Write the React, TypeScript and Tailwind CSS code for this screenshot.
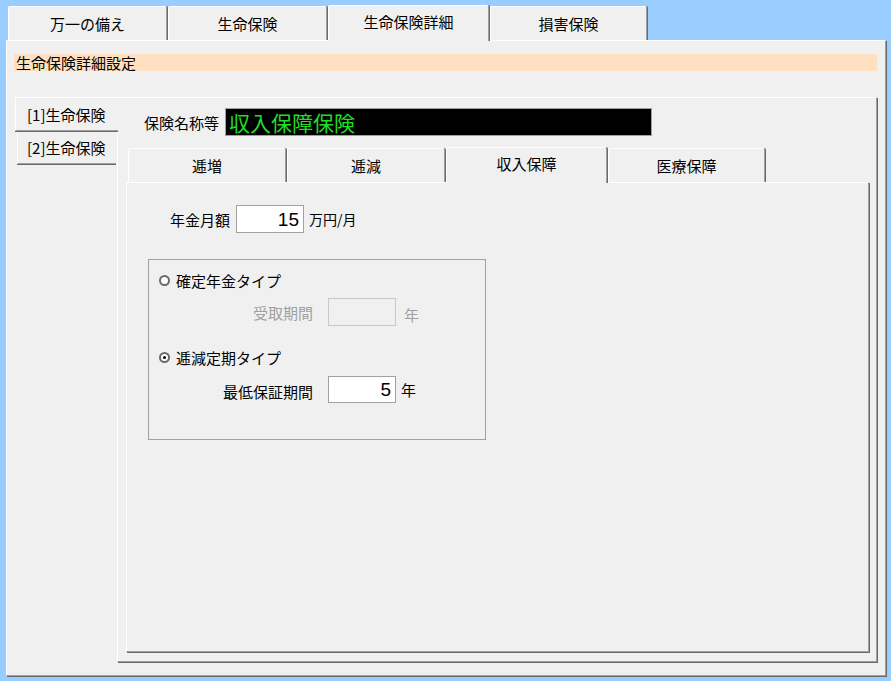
import React from "react";

const F = "font-['Noto_Sans_CJK_JP','Noto_Sans',sans-serif]";

function TopTab({ label, w, sel }: { label: string; w: string; sel?: boolean }) {
  return (
    <div
      className={`${w} ${
        sel ? "h-[36px] -mb-px relative z-10 pb-[4px]" : "h-[34px]"
      } flex items-center justify-center bg-[#f0f0f0] border-t border-l border-r border-white border-r-[#a0a0a0] shadow-[1px_0_0_#696969] rounded-tl-[2px] rounded-tr-[2px] text-[15px] leading-none text-black`}
    >
      {label}
    </div>
  );
}

function Radio({ checked }: { checked?: boolean }) {
  return (
    <span className="w-[11px] h-[11px] rounded-full border-2 border-[#6a6a6a] bg-white flex items-center justify-center shrink-0">
      {checked && <span className="w-[3px] h-[3px] rounded-full bg-black" />}
    </span>
  );
}

export default function App() {
  return (
    <div className={`w-[891px] h-[681px] bg-[#99ccff] flex flex-col pl-[6px] pr-[5px] pb-[5px] pt-[5px] ${F} text-black`}>
      {/* top tabs */}
      <div className="h-[35px] flex items-end gap-[1px] ml-[2px]">
        <TopTab label="万一の備え" w="w-[159px]" />
        <TopTab label="生命保険" w="w-[159px]" />
        <TopTab label="生命保険詳細" w="w-[161px]" sel />
        <TopTab label="損害保険" w="w-[157px]" />
      </div>

      {/* main panel */}
      <div className="flex-1 bg-[#f0f0f0] border-t border-l border-r border-b border-white border-r-[#a0a0a0] border-b-[#a0a0a0] shadow-[1px_1px_0_#696969] flex flex-col pt-[13px] pl-[7px] pr-[8px]">
        <div className="h-[17px] bg-[#ffe0c0] pl-[2px] text-[15px] leading-[17px]">生命保険詳細設定</div>

        <div className="mt-[26px] h-[565px] flex">
          {/* left vertical tabs */}
          <div className="w-[103px] flex flex-col">
            <div className="h-[34px] -mr-px ml-[1px] relative z-10 bg-[#f0f0f0] border-t border-l border-white border-b border-b-[#a0a0a0] shadow-[0_1px_0_#696969] flex items-center pl-[11px] text-[15px] leading-none">
              [1]生命保険
            </div>
            <div className="h-[32px] mt-[1px] ml-[3px] mr-[1px] bg-[#f0f0f0] border-l border-white border-b border-b-[#a0a0a0] shadow-[0_1px_0_#696969] flex items-center pl-[9px] text-[15px] leading-none">
              [2]生命保険
            </div>
          </div>

          {/* body */}
          <div className="flex-1 border-t border-l border-r border-b border-white border-r-[#a0a0a0] border-b-[#a0a0a0] shadow-[1px_1px_0_#696969] flex flex-col pt-[10px]">
            <div className="flex items-center ml-[26px]">
              <div className="w-[81px] text-[15px] leading-none">保険名称等</div>
              <div className="w-[427px] h-[28px] bg-black border border-[#a0a0a0] flex items-center pl-[3px] text-[21px] leading-none text-[#22dd22]">
                収入保障保険
              </div>
            </div>

            {/* sub tabs */}
            <div className="mt-[12px] h-[34px] flex items-end gap-[1px] ml-[10px]">
              <TopTab label="逓増" w="w-[158px]" />
              <TopTab label="逓減" w="w-[158px]" />
              <TopTab label="収入保障" w="w-[161px]" sel />
              <TopTab label="医療保障" w="w-[157px]" />
            </div>

            <div className="flex-1 ml-[8px] mr-[7px] mb-[9px] bg-[#f0f0f0] border-t border-l border-r border-b border-white border-r-[#a0a0a0] border-b-[#a0a0a0] shadow-[1px_1px_0_#696969] flex flex-col pt-[22px] pl-[21px]">
              <div className="flex items-center">
                <div className="w-[88px] pl-[22px] text-[15px] leading-none">年金月額</div>
                <div className="w-[68px] h-[28px] bg-white border border-[#a0a0a0] flex items-center justify-end pr-[4px] font-['Liberation_Sans',sans-serif] text-[19px] leading-none">
                  15
                </div>
                <div className="ml-[5px] text-[14px] leading-none">万円/月</div>
              </div>

              <div className="mt-[26px] w-[338px] h-[181px] border border-[#a0a0a0] flex flex-col pt-[13px]">
                <div className="h-[14px] flex items-center pl-[10px]">
                  <Radio />
                  <span className="ml-[6px] text-[15px] leading-none">確定年金タイプ</span>
                </div>
                <div className="mt-[11px] flex items-center">
                  <div className="w-[164px] text-right text-[15px] leading-none text-[#a0a0a0]">受取期間</div>
                  <div className="ml-[15px] w-[68px] h-[28px] border border-[#c8c8c8] bg-[#f0f0f0]" />
                  <div className="ml-[8px] pt-[5px] text-[15px] leading-none text-[#a0a0a0]">年</div>
                </div>
                <div className="mt-[24px] h-[14px] flex items-center pl-[10px]">
                  <Radio checked />
                  <span className="ml-[6px] text-[15px] leading-none">逓減定期タイプ</span>
                </div>
                <div className="mt-[12px] flex items-center">
                  <div className="w-[164px] text-right text-[15px] leading-none pt-[3px]">最低保証期間</div>
                  <div className="ml-[15px] w-[68px] h-[27px] bg-white border border-[#a0a0a0] flex items-center justify-end pr-[4px] font-['Liberation_Sans',sans-serif] text-[19px] leading-none">
                    5
                  </div>
                  <div className="ml-[5px] text-[15px] leading-none">年</div>
                </div>
              </div>
            </div>
          </div>
        </div>
      </div>
    </div>
  );
}
